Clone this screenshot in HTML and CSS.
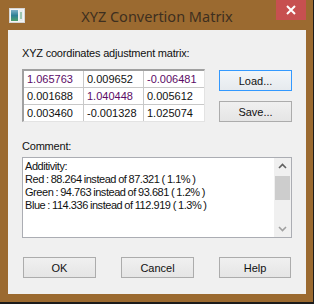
FILE: index.html
```html
<!DOCTYPE html>
<html lang="en">
<head>
    <meta charset="UTF-8">
    <title>XYZ Convertion Matrix</title>
    <link rel="stylesheet" href="styles.css">
</head>
<body>
    <div class="window">
        <!-- barra de titulo -->
        <div class="titlebar">
            <svg class="app-icon" width="16" height="15" viewBox="0 0 16 15">
                <defs>
                    <linearGradient id="ig" x1="0" y1="0" x2="0" y2="1">
                        <stop offset="0" stop-color="#7fb0c8"/>
                        <stop offset="0.5" stop-color="#2f7f96"/>
                        <stop offset="1" stop-color="#4fa06a"/>
                    </linearGradient>
                </defs>
                <rect x="0.5" y="0.5" width="15" height="14" fill="#f4f4f4" stroke="#d6d6d6"/>
                <rect x="2" y="2" width="7" height="11" fill="url(#ig)"/>
                <rect x="10" y="2" width="4" height="11" fill="#e6ecee"/>
                <rect x="11" y="4" width="2" height="7" fill="#9cc6b0"/>
            </svg>
            <div class="title">XYZ Convertion Matrix</div>
            <div class="close">
                <svg width="30" height="20" viewBox="0 0 30 20">
                    <path d="M11 6 L19 14 M19 6 L11 14" stroke="#fff" stroke-width="2"/>
                </svg>
            </div>
        </div>

        <div class="client">
            <div class="label label-matrix">XYZ coordinates adjustment matrix:</div>

            <div class="matrix-row">
                <div class="matrix">
                    <div class="cell hl">1.065763</div>
                    <div class="cell">0.009652</div>
                    <div class="cell hl">-0.006481</div>
                    <div class="cell">0.001688</div>
                    <div class="cell hl">1.040448</div>
                    <div class="cell">0.005612</div>
                    <div class="cell">0.003460</div>
                    <div class="cell">-0.001328</div>
                    <div class="cell">1.025074</div>
                </div>
                <div class="side-buttons">
                    <button class="btn btn-default">Load...</button>
                    <button class="btn">Save...</button>
                </div>
            </div>

            <div class="label label-comment">Comment:</div>

            <div class="comment">
                <div class="comment-text">
                    Additivity:<br>
                    Red : 88.264 instead of 87.321 ( 1.1% )<br>
                    Green : 94.763 instead of 93.681 ( 1.2% )<br>
                    Blue : 114.336 instead of 112.919 ( 1.3% )
                </div>
                <div class="scrollbar">
                    <div class="arrow">
                        <svg width="17" height="17" viewBox="0 0 17 17"><path d="M5 10 L8.5 6.5 L12 10" fill="none" stroke="#606060" stroke-width="1.6"/></svg>
                    </div>
                    <div class="thumb"></div>
                    <div class="track"></div>
                    <div class="arrow">
                        <svg width="17" height="17" viewBox="0 0 17 17"><path d="M5 7 L8.5 10.5 L12 7" fill="none" stroke="#a0a0a0" stroke-width="1.6"/></svg>
                    </div>
                </div>
            </div>

            <div class="footer">
                <button class="btn">OK</button>
                <button class="btn">Cancel</button>
                <button class="btn btn-help">Help</button>
            </div>
        </div>
    </div>
</body>
</html>
```

FILE: styles.css
```css
body {
    margin: 0;
    width: 314px;
    height: 304px;
    background: #1c1c1c;
    font-family: "Liberation Sans", Arial, sans-serif;
    font-size: 11px;
    color: #111;
}

.window {
    width: 313px;
    height: 302px;
    box-sizing: border-box;
    padding: 0 7px 8px 8px;
    background: #9b6a30;
}

.titlebar {
    height: 30px;
    display: grid;
    grid-template-columns: 30px 1fr 30px;
    align-items: start;
}

.app-icon {
    margin: 8px 0 0 1px;
}

.title {
    text-align: center;
    font-family: "Noto Sans", sans-serif;
    font-size: 14.5px;
    line-height: 20px;
    padding-top: 6px;
    color: #3e2f1f;
}

.close {
    width: 30px;
    height: 20px;
    background: #c75050;
}

.close svg {
    display: block;
}

.client {
    height: 264px;
    background: #f0f0f0;
    padding-left: 14px;
    box-sizing: border-box;
    overflow: hidden;
}

.label {
    line-height: 13px;
    letter-spacing: -0.2px;
}

.label-matrix {
    padding-top: 17px;
}

.matrix-row {
    display: flex;
    margin-top: 9px;
}

.matrix {
    display: grid;
    grid-template-columns: 59px 59px 60px;
    grid-auto-rows: 16px;
    gap: 1px;
    background: #c8c8c8;
    border-top: 2px solid #a0a0a0;
    border-left: 2px solid #a0a0a0;
    border-right: 1px solid #e3e3e3;
    border-bottom: 1px solid #e3e3e3;
}

.cell {
    background: #fff;
    line-height: 16px;
    padding-left: 3px;
}

.cell.hl {
    color: #5c0a66;
}

.side-buttons {
    display: flex;
    flex-direction: column;
    gap: 10px;
    margin: 1px 0 0 14px;
}

.btn {
    width: 73px;
    height: 21px;
    padding: 0;
    border: 1px solid #acacac;
    background: linear-gradient(#f0f0f0, #e5e5e5);
    font-family: "Liberation Sans", Arial, sans-serif;
    font-size: 11px;
    color: #111;
}

.btn-default {
    border-color: #3399ff;
    background: linear-gradient(#f2f5f8, #e6eaee);
}

.label-comment {
    margin-top: 18px;
}

.comment {
    display: flex;
    width: 270px;
    height: 81px;
    margin-top: 4px;
    box-sizing: border-box;
    border: 1px solid #abadb3;
    background: #fff;
}

.comment-text {
    flex: 1;
    padding: 2px 0 0 2px;
    line-height: 13px;
    letter-spacing: -0.45px;
    word-spacing: -0.5px;
}

.scrollbar {
    width: 17px;
    display: flex;
    flex-direction: column;
    background: #f0f0f0;
}

.arrow {
    height: 17px;
}

.arrow svg {
    display: block;
}

.thumb {
    height: 24px;
    margin: 1px 1px 0 1px;
    background: #cdcdcd;
}

.track {
    flex: 1;
}

.footer {
    display: flex;
    gap: 25px;
    margin-top: 19px;
    padding-left: 1px;
}

.btn-help {
    width: 72px;
}
```
